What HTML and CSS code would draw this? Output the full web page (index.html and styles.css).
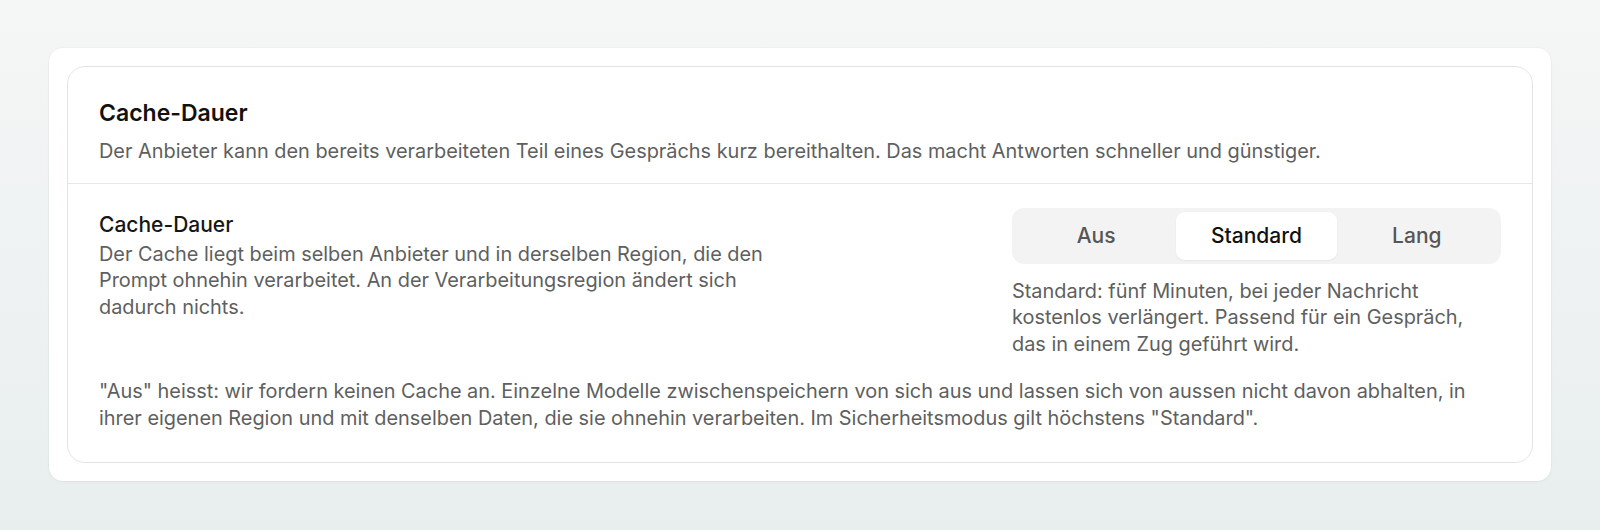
FILE: index.html
```html
<!DOCTYPE html>
<html lang="de">
<head>
  <meta charset="UTF-8">
  <meta name="viewport" content="width=device-width, initial-scale=1.0">
  <title>Cache-Dauer</title>
  <link rel="stylesheet" href="styles.css">
</head>
<body>
  <div class="settings-panel">
    <section class="settings-card">
      <header class="card-header">
        <h2>Cache-Dauer</h2>
        <p class="muted">Der Anbieter kann den bereits verarbeiteten Teil eines Gesprächs kurz bereithalten. Das macht Antworten schneller und günstiger.</p>
      </header>

      <div class="card-body">
        <div class="setting-row">
          <div class="setting-info">
            <h3>Cache-Dauer</h3>
            <p class="muted">Der Cache liegt beim selben Anbieter und in derselben Region, die den Prompt ohnehin verarbeitet. An der Verarbeitungsregion ändert sich dadurch nichts.</p>
          </div>

          <div class="setting-control">
            <div class="segmented" role="radiogroup">
              <button type="button" class="segment">Aus</button>
              <button type="button" class="segment active">Standard</button>
              <button type="button" class="segment">Lang</button>
            </div>
            <p class="muted hint">Standard: fünf Minuten, bei jeder Nachricht kostenlos verlängert. Passend für ein Gespräch, das in einem Zug geführt wird.</p>
          </div>
        </div>

        <p class="muted note">"Aus" heisst: wir fordern keinen Cache an. Einzelne Modelle zwischenspeichern von sich aus und lassen sich von aussen nicht davon abhalten, in ihrer eigenen Region und mit denselben Daten, die sie ohnehin verarbeiten. Im Sicherheitsmodus gilt höchstens "Standard".</p>
      </div>
    </section>
  </div>
</body>
</html>
```

FILE: styles.css
```css
* {
  margin: 0;
  padding: 0;
  box-sizing: border-box;
  font-family: 'Inter', 'Noto Sans', sans-serif;
}

body {
  min-height: 100vh;
  padding: 48px 49px 50px;
  background: linear-gradient(to bottom, #f5f6f6, #e8eeee);
  color: #111;
}

.settings-panel {
  background: #fff;
  padding: 18px;
  border-radius: 14px;
  box-shadow: 0 1px 3px rgba(0, 0, 0, 0.04), 0 0 0 1px rgba(0, 0, 0, 0.02);
}

.settings-card {
  border: 1px solid #e3e5e5;
  border-radius: 18px;
  background: #fff;
}

.muted {
  font-size: 19.9px;
  line-height: 26.4px;
  color: #5e5f60;
}

.card-header {
  padding: 31px 31px 19px;
  border-bottom: 1px solid #e6e8e8;
}

.card-header h2 {
  font-size: 23px;
  line-height: 30px;
  font-weight: 600;
  color: #111;
  margin-bottom: 9.5px;
}

.card-body {
  padding: 24px 31px 31px;
}

.setting-row {
  display: flex;
  justify-content: space-between;
  gap: 40px;
}

.setting-info {
  max-width: 690px;
}

.setting-info h3 {
  font-size: 21px;
  line-height: 33px;
  font-weight: 500;
  color: #161616;
}

.setting-control {
  width: 489px;
  flex-shrink: 0;
}

.segmented {
  display: flex;
  padding: 4px;
  background: #f3f3f3;
  border-radius: 12px;
}

.segment {
  flex: 1;
  height: 48px;
  border: none;
  border-radius: 9px;
  background: transparent;
  font-size: 21px;
  font-weight: 500;
  color: #565656;
  cursor: pointer;
}

.segment.active {
  background: #fff;
  color: #111;
  box-shadow: 0 1px 2px rgba(0, 0, 0, 0.05);
}

.hint {
  margin-top: 14px;
  max-width: 470px;
}

.note {
  margin-top: 21px;
}
```
